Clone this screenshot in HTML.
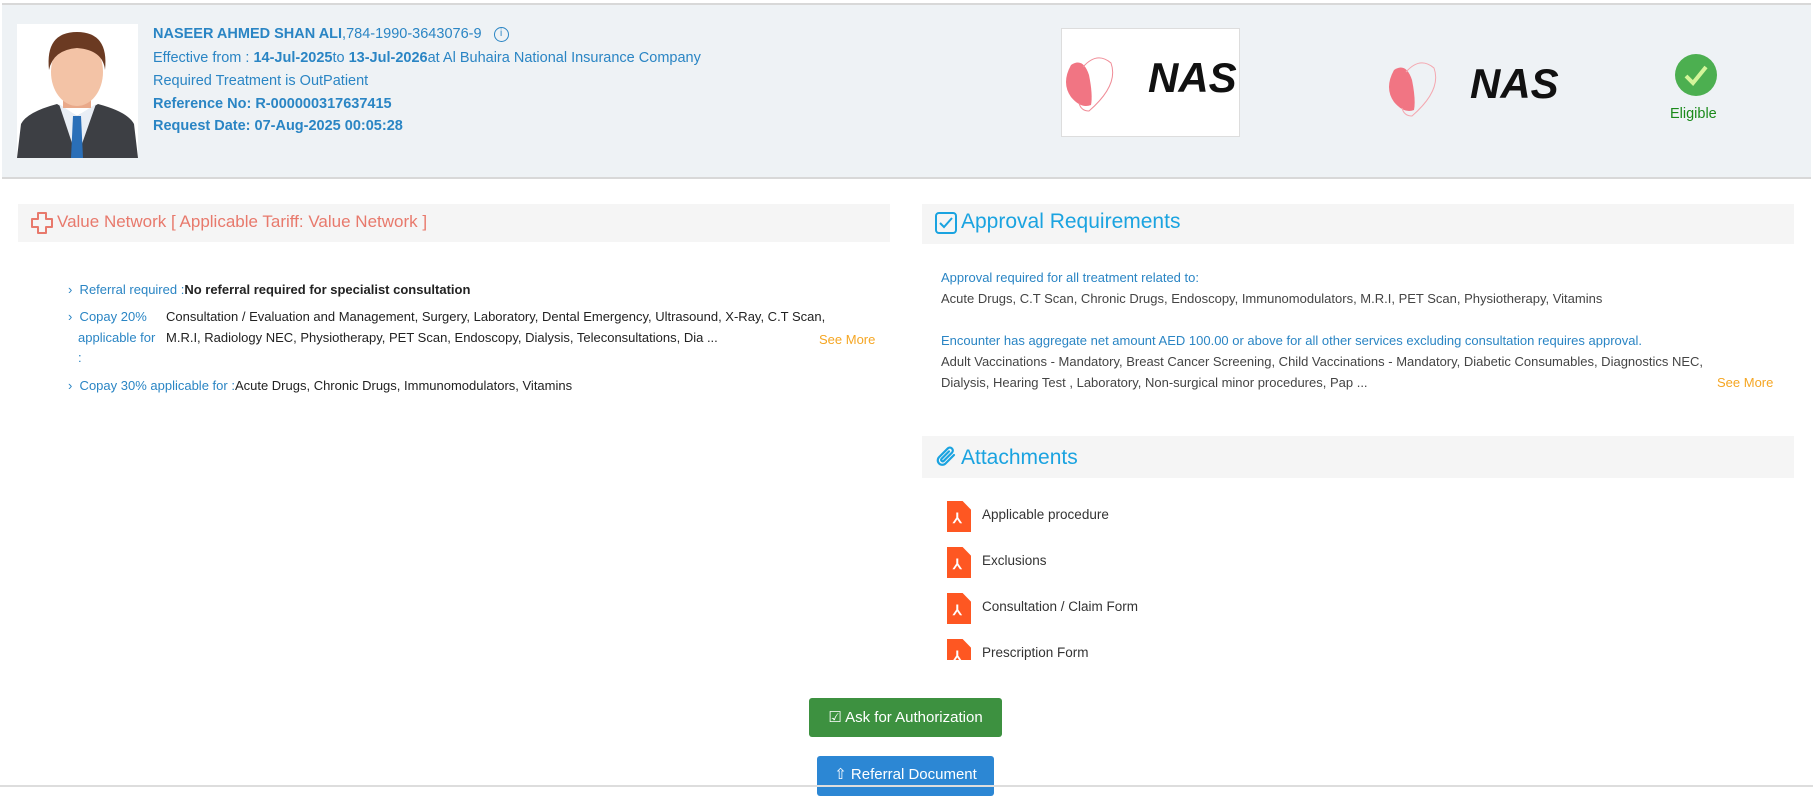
<!DOCTYPE html>
<html><head><meta charset="utf-8"><style>
*{box-sizing:border-box;margin:0;padding:0}
body{width:1813px;height:787px;overflow:hidden;background:#fff;font-family:"Liberation Sans",sans-serif;position:relative;color:#333}
.abs{position:absolute;white-space:nowrap}
.hdr{position:absolute;left:2px;top:3px;width:1809px;height:176px;background:#eef2f5;border-top:2px solid #d8d8d8;border-bottom:2px solid #d8d8d8}
.info{color:#2a85c4;font-size:14.5px}
.info b{font-weight:bold}
.ph{position:absolute;left:0;width:872px;height:38px;background:#f5f5f5}
.lab{color:#2a85c4;font-size:13px}
.val{color:#222;font-size:13px}
.sm{color:#f5a623;font-size:13px}
.att{color:#333;font-size:13.5px}
.pdf{position:absolute;width:24px;height:31px;background:#fe5722;clip-path:polygon(0 0,65% 0,100% 28%,100% 100%,0 100%)}
.pdf:after{content:"⅄";position:absolute;left:6px;top:9px;color:#fff;font-size:14px;font-weight:bold}
.btn{position:absolute;color:#fff;font-size:15px;border-radius:3px;text-align:center}
</style></head><body>
<div class="hdr"></div>
<svg class="abs" style="left:17px;top:24px" width="121" height="134" viewBox="0 0 121 134">
<rect width="121" height="134" fill="#fff"/>
<path d="M0 134 L4 100 Q10 88 40 80 L60 92 L81 80 Q111 88 117 100 L121 134Z" fill="#3d3f44"/>
<path d="M42 80 L60 134 L79 80 L60 92Z" fill="#e9eef5"/>
<path d="M56 92 L64 92 L66 134 L54 134Z" fill="#2a6fb8"/>
<rect x="46" y="62" width="28" height="22" fill="#e9a98a"/>
<ellipse cx="60" cy="48" rx="26" ry="34" fill="#f3c3a6"/>
<path d="M32 46 Q28 8 60 8 Q92 8 88 46 Q86 26 60 24 Q36 26 32 46Z" fill="#6b3a22"/>
</svg>
<div class="abs info" style="left:153px;top:26px"><b style="font-weight:600">NASEER AHMED SHAN ALI</b>,784-1990-3643076-9 &nbsp;&nbsp;<span style="display:inline-block;width:15px;height:15px;border:1.5px solid #2a85c4;border-radius:50%;font-size:10px;text-align:center;line-height:12px;vertical-align:2px">i</span></div>
<div class="abs info" style="left:153px;top:50px">Effective from : <b>14-Jul-2025</b>to <b>13-Jul-2026</b>at Al Buhaira National Insurance Company</div>
<div class="abs info" style="left:153px;top:73px">Required Treatment is OutPatient</div>
<div class="abs info" style="left:153px;top:96px;font-weight:bold">Reference No: R-000000317637415</div>
<div class="abs info" style="left:153px;top:118px;font-weight:bold">Request Date: 07-Aug-2025 00:05:28</div>
<div class="abs" style="left:1061px;top:28px;width:179px;height:109px;background:#fff;border:1px solid #ddd"></div>
<svg class="abs" style="left:1061px;top:55px" width="70" height="60" viewBox="0 0 70 60"><path d="M10 10 Q22 2 28 20 Q32 40 30 50 Q20 54 10 42 Q0 28 10 10Z" fill="#f17583"/><path d="M22 12 Q36 -4 50 8 Q58 30 28 56 Q20 56 18 48" fill="none" stroke="#f08c97" stroke-width="1"/></svg>
<div class="abs" style="left:1148px;top:54px;font:italic bold 42px 'Liberation Sans',sans-serif;color:#111">NAS</div>
<svg class="abs" style="left:1384px;top:60px" width="70" height="60" viewBox="0 0 70 60"><path d="M10 10 Q22 2 28 20 Q32 40 30 50 Q20 54 10 42 Q0 28 10 10Z" fill="#f17583"/><path d="M22 12 Q36 -4 50 8 Q58 30 28 56 Q20 56 18 48" fill="none" stroke="#f4a8b0" stroke-width="1"/></svg>
<div class="abs" style="left:1470px;top:60px;font:italic bold 42px 'Liberation Sans',sans-serif;color:#111">NAS</div>
<svg class="abs" style="left:1675px;top:54px" width="42" height="42"><circle cx="21" cy="21" r="21" fill="#4caf50"/><path d="M11 22 L18 29 L31 13" fill="none" stroke="#d4f59a" stroke-width="4"/></svg>
<div class="abs" style="left:1670px;top:106px;font-size:14.5px;color:#1a8a1a">Eligible</div>
<div class="ph" style="left:18px;top:204px"></div>
<svg class="abs" style="left:30px;top:211px" width="24" height="24" viewBox="0 0 24 24"><path d="M8 2h8v6h6v8h-6v6H8v-6H2V8h6z" fill="none" stroke="#e8796c" stroke-width="2" stroke-linejoin="round"/></svg>
<div class="abs" style="left:57px;top:212px;font-size:17px;color:#e8796c">Value Network [ Applicable Tariff: Value Network ]</div>
<div class="abs lab" style="left:68px;top:282px">›&nbsp; Referral required :<b class="val" style="font-weight:bold">No referral required for specialist consultation</b></div>
<div class="abs lab" style="left:68px;top:309px">›&nbsp; Copay 20%</div>
<div class="abs lab" style="left:78px;top:330px">applicable for</div>
<div class="abs lab" style="left:78px;top:350px">:</div>
<div class="abs val" style="left:166px;top:309px">Consultation / Evaluation and Management, Surgery, Laboratory, Dental Emergency, Ultrasound, X-Ray, C.T Scan,</div>
<div class="abs val" style="left:166px;top:330px">M.R.I, Radiology NEC, Physiotherapy, PET Scan, Endoscopy, Dialysis, Teleconsultations, Dia ...</div>
<div class="abs sm" style="left:819px;top:332px">See More</div>
<div class="abs lab" style="left:68px;top:378px">›&nbsp; Copay 30% applicable for :<span class="val">Acute Drugs, Chronic Drugs, Immunomodulators, Vitamins</span></div>
<div class="ph" style="left:922px;top:204px;height:40px"></div>
<svg class="abs" style="left:934px;top:211px" width="24" height="24" viewBox="0 0 24 24"><rect x="2" y="2" width="20" height="20" rx="3" fill="none" stroke="#1aa3e0" stroke-width="2"/><path d="M6 12l4 4 8-9" fill="none" stroke="#1aa3e0" stroke-width="2"/></svg>
<div class="abs" style="left:961px;top:210px;font-size:21px;color:#1aa3e0">Approval Requirements</div>
<div class="abs lab" style="left:941px;top:270px">Approval required for all treatment related to:</div>
<div class="abs val" style="left:941px;top:291px;color:#444">Acute Drugs, C.T Scan, Chronic Drugs, Endoscopy, Immunomodulators, M.R.I, PET Scan, Physiotherapy, Vitamins</div>
<div class="abs lab" style="left:941px;top:333px">Encounter has aggregate net amount AED 100.00 or above for all other services excluding consultation requires approval.</div>
<div class="abs val" style="left:941px;top:354px;color:#444">Adult Vaccinations - Mandatory, Breast Cancer Screening, Child Vaccinations - Mandatory, Diabetic Consumables, Diagnostics NEC,</div>
<div class="abs val" style="left:941px;top:375px;color:#444">Dialysis, Hearing Test , Laboratory, Non-surgical minor procedures, Pap ...</div>
<div class="abs sm" style="left:1717px;top:375px">See More</div>
<div class="ph" style="left:922px;top:436px;height:42px"></div>
<svg class="abs" style="left:934px;top:445px" width="24" height="24" viewBox="0 0 24 24"><path d="M20 10l-8.5 8.5a4.5 4.5 0 01-6.4-6.4L14 3.2a3 3 0 014.2 4.2L9.6 16a1.5 1.5 0 01-2.1-2.1L15 6.4" fill="none" stroke="#1aa3e0" stroke-width="2.2" stroke-linecap="round"/></svg>
<div class="abs" style="left:961px;top:446px;font-size:21px;color:#1aa3e0">Attachments</div>
<div style="position:absolute;left:922px;top:490px;width:400px;height:170px;overflow:hidden">
<div class="pdf" style="left:25px;top:11px"></div><div class="abs att" style="left:60px;top:17px">Applicable procedure</div>
<div class="pdf" style="left:25px;top:57px"></div><div class="abs att" style="left:60px;top:63px">Exclusions</div>
<div class="pdf" style="left:25px;top:103px"></div><div class="abs att" style="left:60px;top:109px">Consultation / Claim Form</div>
<div class="pdf" style="left:25px;top:149px"></div><div class="abs att" style="left:60px;top:155px">Prescription Form</div>
</div>
<div class="btn" style="left:809px;top:698px;width:193px;height:39px;background:#3d9140;line-height:39px">☑ Ask for Authorization</div>
<div class="btn" style="left:817px;top:756px;width:177px;height:40px;background:#2c87d4;line-height:38px">⇧ Referral Document</div>
<div class="abs" style="left:0;top:785px;width:1813px;height:2px;background:#ddd;z-index:5"></div>
</body></html>
